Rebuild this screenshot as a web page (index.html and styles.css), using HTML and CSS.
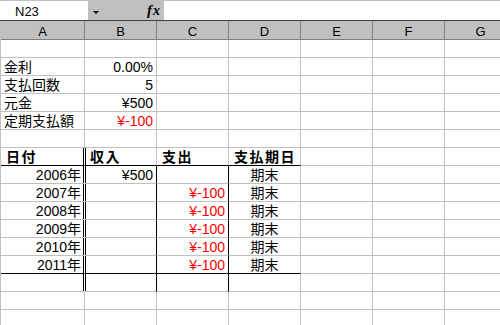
FILE: index.html
```html
<!DOCTYPE html>
<html>
<head>
<meta charset="utf-8">
<title>定期支払</title>
<link rel="stylesheet" href="styles.css">
</head>
<body>
<div class="fbar">
	<div class="namebox">N23</div>
	<div class="fbtn"><span class="arrow"></span><span class="fx"><i>f</i>x</span></div>
	<div class="formula"></div>
</div>

<div class="sheet">
	<div class="colhead">
		<div>A</div><div>B</div><div>C</div><div>D</div><div>E</div><div>F</div><div>G</div>
	</div>

	<div class="row"><div></div><div></div><div></div><div></div><div></div><div></div><div></div></div>
	<div class="row"><div>金利</div><div class="num">0.00%</div><div></div><div></div><div></div><div></div><div></div></div>
	<div class="row"><div>支払回数</div><div class="num">5</div><div></div><div></div><div></div><div></div><div></div></div>
	<div class="row"><div>元金</div><div class="num">¥500</div><div></div><div></div><div></div><div></div><div></div></div>
	<div class="row"><div>定期支払額</div><div class="num red">¥-100</div><div></div><div></div><div></div><div></div><div></div></div>
	<div class="row"><div></div><div></div><div></div><div></div><div></div><div></div><div></div></div>

	<!-- 表 -->
	<div class="row">
		<div class="th bb dl">日付</div><div class="th bb dr">収入</div><div class="th bb">支出</div><div class="th bb">支払期日</div>
		<div></div><div></div><div></div>
	</div>
	<div class="row">
		<div class="num dl">2006年</div><div class="num dr br">¥500</div><div class="br"></div><div class="ctr">期末</div>
		<div></div><div></div><div></div>
	</div>
	<div class="row">
		<div class="num dl">2007年</div><div class="dr br"></div><div class="num red br">¥-100</div><div class="ctr">期末</div>
		<div></div><div></div><div></div>
	</div>
	<div class="row">
		<div class="num dl">2008年</div><div class="dr br"></div><div class="num red br">¥-100</div><div class="ctr">期末</div>
		<div></div><div></div><div></div>
	</div>
	<div class="row">
		<div class="num dl">2009年</div><div class="dr br"></div><div class="num red br">¥-100</div><div class="ctr">期末</div>
		<div></div><div></div><div></div>
	</div>
	<div class="row">
		<div class="num dl">2010年</div><div class="dr br"></div><div class="num red br">¥-100</div><div class="ctr">期末</div>
		<div></div><div></div><div></div>
	</div>
	<div class="row">
		<div class="num dl bb">2011年</div><div class="dr br bb"></div><div class="num red br bb">¥-100</div><div class="ctr bb">期末</div>
		<div></div><div></div><div></div>
	</div>
	<div class="row">
		<div class="dl"></div><div class="dr br"></div><div class="br"></div><div></div>
		<div></div><div></div><div></div>
	</div>

	<div class="row"><div></div><div></div><div></div><div></div><div></div><div></div><div></div></div>
	<div class="row"><div></div><div></div><div></div><div></div><div></div><div></div><div></div></div>
</div>
</body>
</html>
```

FILE: styles.css
```css
html, body{
	margin: 0;
	padding: 0;
	width: 500px;
	height: 325px;
	overflow: hidden;
	background: #FFF;
}
body{
	font-family: "Liberation Sans", "Noto Sans CJK JP", sans-serif;
	font-size: 14px;
	color: #000;
}

/* 数式バー */
.fbar{
	display: flex;
	height: 19px;
	border-top: 1px solid #C0C0C0;
	border-bottom: 1px solid #404040;
}
.namebox{
	width: 73px;
	padding: 2px 0 0 15px;
	font-size: 13px;
	line-height: 17px;
	background: #FFF;
}
.fbtn{
	display: flex;
	width: 76px;
	background: #C0C0C0;
}
.arrow{
	width: 0;
	height: 0;
	margin: 10px 0 0 5px;
	border-left: 3px solid transparent;
	border-right: 3px solid transparent;
	border-top: 3px solid #000;
}
.fx{
	margin-left: auto;
	padding: 1px 4px 0 0;
	font-family: "Liberation Serif", serif;
	font-size: 14px;
	font-weight: bold;
	font-style: italic;
	line-height: 17px;
}
.fx i{font-size: 15px; margin-right: 1px;}
.formula{flex: 1; background: #FFF;}

/* シート */
.sheet{
	width: 517px;
	border-left: 1px solid #C0C0C0;
}
.colhead, .row{
	display: grid;
	grid-template-columns: 84px repeat(6, 72px);
}
.colhead{
	height: 19px;
	background: #C0C0C0;
}
.colhead > div{
	box-sizing: border-box;
	border-right: 1px solid #808080;
	border-bottom: 1px solid #808080;
	padding-top: 4px;
	font-size: 13px;
	line-height: 14px;
	text-align: center;
}
.row{height: 18px;}
.row > div{
	box-sizing: border-box;
	border-right: 1px solid #C0C0C0;
	border-bottom: 1px solid #C0C0C0;
	padding: 2px 3px 0 3px;
	line-height: 15px;
	white-space: nowrap;
	overflow: hidden;
}

.num{text-align: right;}
.ctr{text-align: center;}
.red{color: #F00;}
.th{
	font-weight: bold;
	letter-spacing: 1.5px;
	padding-left: 5px !important;
}

/* 罫線 */
.row > .bb{border-bottom-color: #000;}
.row > .br{border-right-color: #000;}
.row > .dl{
	border-right-color: #FFF;
	box-shadow: inset -1px 0 0 #000;
}
.row > .dr{box-shadow: inset 1px 0 0 #000;}
```
